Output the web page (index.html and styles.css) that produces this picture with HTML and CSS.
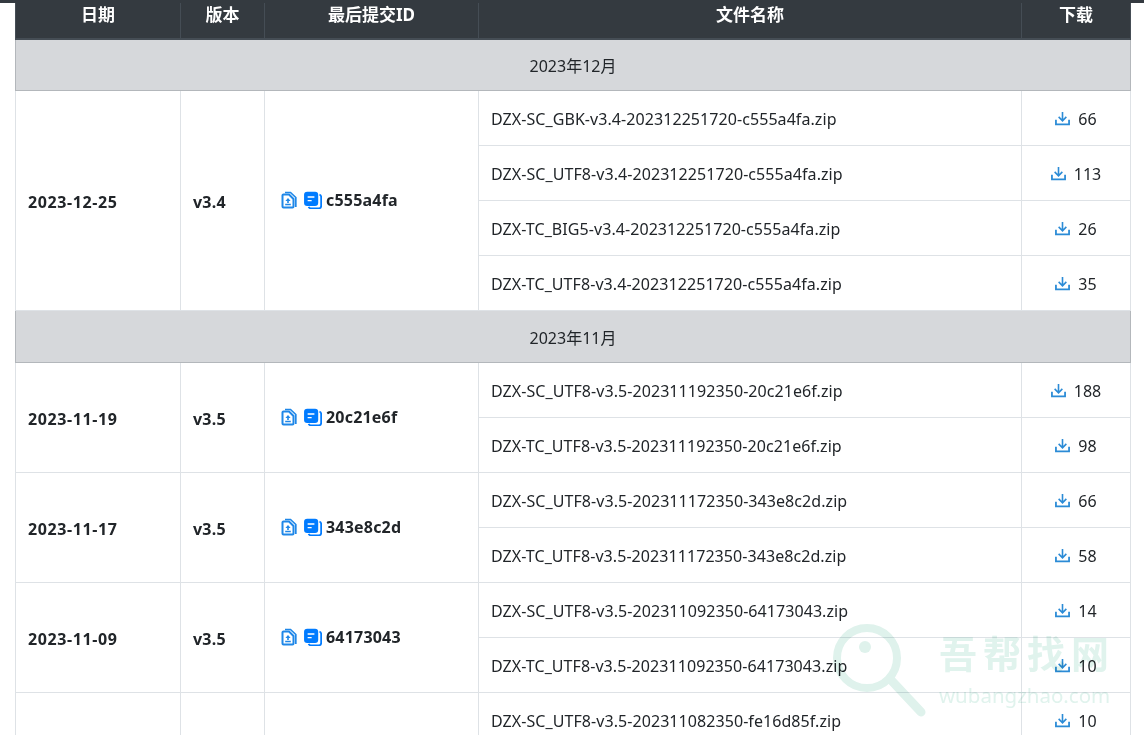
FILE: index.html
```html
<!DOCTYPE html>
<html lang="zh-CN">
<head>
<meta charset="utf-8">
<title>下载</title>
<link rel="stylesheet" href="styles.css">
</head>
<body>
<svg class="defs" width="0" height="0" aria-hidden="true">
  <symbol id="dl" viewBox="0 0 16 16">
    <path d="M8 1v9.2M3.9 6.3 8 10.4l4.1-4.1" fill="none" stroke="currentColor" stroke-width="1.7"/>
    <path d="M1 9.2v5h14v-5" fill="none" stroke="currentColor" stroke-width="1.9"/>
  </symbol>
  <symbol id="fa" viewBox="0 0 16 17">
    <path d="M4 1h5.5L14.8 6v9.4" fill="none" stroke="currentColor" stroke-width="1.7"/>
    <path d="M2.5 3H8l4.5 4.5V15a1 1 0 0 1-1 1h-9a1 1 0 0 1-1-1V4a1 1 0 0 1 1-1z" fill="#fff" stroke="currentColor" stroke-width="2"/>
    <path d="M7 6.6 4.4 9.4h5.2zM6.2 9.4h1.6v2H6.2zM4.2 12.2h5.6v1.6H4.2z" fill="currentColor"/>
  </symbol>
  <symbol id="fb" viewBox="0 0 18 17">
    <path d="M15.6 3.5c1 .3 1.6 1 1.6 2v8.6c0 1.4-1 2.3-2.4 2.3H7.5c-1 0-1.8-.5-2.2-1.3" fill="none" stroke="currentColor" stroke-width="1.7"/>
    <rect x="1" y="0.6" width="13.4" height="13.6" rx="3" fill="currentColor"/>
    <path d="M4.4 5h6.4v1.4H4.4zM4.4 8.4h3.8v1.4H4.4z" fill="#fff"/>
  </symbol>
</svg>
<div class="topstrip"></div>
<main class="page">
<table class="files">
  <colgroup>
    <col class="c-date"><col class="c-ver"><col class="c-id"><col class="c-name"><col class="c-count">
  </colgroup>
  <thead>
    <tr><th>日期</th><th>版本</th><th>最后提交ID</th><th>文件名称</th><th>下载</th></tr>
  </thead>
  <tbody>
    <tr class="month"><td colspan="5">2023年12月</td></tr>
    <tr>
      <td class="strong date" rowspan="4">2023-12-25</td><td class="strong" rowspan="4">v3.4</td>
      <td class="strong" rowspan="4"><span class="commit"><svg class="ic-a"><use href="#fa"/></svg><svg class="ic-b"><use href="#fb"/></svg>c555a4fa</span></td>
      <td class="file">DZX-SC_GBK-v3.4-202312251720-c555a4fa.zip</td>
      <td class="count"><svg class="ic-d"><use href="#dl"/></svg>66</td>
    </tr>
    <tr><td class="file">DZX-SC_UTF8-v3.4-202312251720-c555a4fa.zip</td><td class="count"><svg class="ic-d"><use href="#dl"/></svg>113</td></tr>
    <tr><td class="file">DZX-TC_BIG5-v3.4-202312251720-c555a4fa.zip</td><td class="count"><svg class="ic-d"><use href="#dl"/></svg>26</td></tr>
    <tr><td class="file">DZX-TC_UTF8-v3.4-202312251720-c555a4fa.zip</td><td class="count"><svg class="ic-d"><use href="#dl"/></svg>35</td></tr>
    <tr class="month month-tall"><td colspan="5">2023年11月</td></tr>
    <tr>
      <td class="strong date" rowspan="2">2023-11-19</td><td class="strong" rowspan="2">v3.5</td>
      <td class="strong" rowspan="2"><span class="commit"><svg class="ic-a"><use href="#fa"/></svg><svg class="ic-b"><use href="#fb"/></svg>20c21e6f</span></td>
      <td class="file">DZX-SC_UTF8-v3.5-202311192350-20c21e6f.zip</td>
      <td class="count"><svg class="ic-d"><use href="#dl"/></svg>188</td>
    </tr>
    <tr><td class="file">DZX-TC_UTF8-v3.5-202311192350-20c21e6f.zip</td><td class="count"><svg class="ic-d"><use href="#dl"/></svg>98</td></tr>
    <tr>
      <td class="strong date" rowspan="2">2023-11-17</td><td class="strong" rowspan="2">v3.5</td>
      <td class="strong" rowspan="2"><span class="commit"><svg class="ic-a"><use href="#fa"/></svg><svg class="ic-b"><use href="#fb"/></svg>343e8c2d</span></td>
      <td class="file">DZX-SC_UTF8-v3.5-202311172350-343e8c2d.zip</td>
      <td class="count"><svg class="ic-d"><use href="#dl"/></svg>66</td>
    </tr>
    <tr><td class="file">DZX-TC_UTF8-v3.5-202311172350-343e8c2d.zip</td><td class="count"><svg class="ic-d"><use href="#dl"/></svg>58</td></tr>
    <tr>
      <td class="strong date" rowspan="2">2023-11-09</td><td class="strong" rowspan="2">v3.5</td>
      <td class="strong" rowspan="2"><span class="commit"><svg class="ic-a"><use href="#fa"/></svg><svg class="ic-b"><use href="#fb"/></svg>64173043</span></td>
      <td class="file">DZX-SC_UTF8-v3.5-202311092350-64173043.zip</td>
      <td class="count"><svg class="ic-d"><use href="#dl"/></svg>14</td>
    </tr>
    <tr><td class="file">DZX-TC_UTF8-v3.5-202311092350-64173043.zip</td><td class="count"><svg class="ic-d"><use href="#dl"/></svg>10</td></tr>
    <tr>
      <td></td><td></td><td></td>
      <td class="file">DZX-SC_UTF8-v3.5-202311082350-fe16d85f.zip</td>
      <td class="count"><svg class="ic-d"><use href="#dl"/></svg>10</td>
    </tr>
  </tbody>
</table>
</main>
<div class="watermark" aria-label="吾帮找网 wubangzhao.com">
  <svg class="wm-logo" viewBox="0 0 96 96">
    <circle cx="35" cy="36" r="30" fill="none" stroke="#dff2ec" stroke-width="8"/>
    <circle cx="33" cy="25" r="6" fill="#dff2ec"/>
    <path d="M59 58 89 90" fill="none" stroke="#dff2ec" stroke-width="9" stroke-linecap="round"/>
  </svg>
  <div class="wm-text">
    <div class="wm-cn">吾帮找网</div>
    <div class="wm-en">wubangzhao.com</div>
  </div>
</div>
</body>
</html>
```
FILE: styles.css
```css
html, body {
  margin: 0;
  padding: 0;
  background: #fff;
  overflow: hidden;
  height: 735px;
}
body {
  font-family: "Noto Sans", "Noto Sans CJK SC", sans-serif;
  font-size: 16px;
  color: #212529;
}
.defs {
  position: absolute;
}
.topstrip {
  height: 3px;
  background: #343a40;
}
.page {
  padding: 0 14px 0 15px;
}
.files {
  width: 1115px;
  table-layout: fixed;
  border-collapse: collapse;
  margin: 0;
}
.c-date { width: 165px; }
.c-ver { width: 84px; }
.c-id { width: 214px; }
.c-name { width: 543px; }
.c-count { width: 109px; }
.files th {
  height: 36px;
  padding: 0 0 11px;
  box-sizing: border-box;
  background: #343a40;
  color: #fff;
  font-weight: 700;
  text-align: center;
  border: 1px solid #454d55;
  border-top: 0;
  border-bottom: 2px solid #454d55;
  font-size: 17px;
  line-height: 24px;
}
.files td {
  height: 55px;
  box-sizing: border-box;
  padding: 0 12px;
  border: 1px solid #dee2e6;
}
.files td.strong {
  font-weight: 700;
  padding-top: 3px;
  letter-spacing: 0.2px;
}
.files td.date {
  letter-spacing: 0.6px;
}
.files td.file {
  padding-top: 2px;
  letter-spacing: 0.07px;
}
.files .month td {
  height: 51px;
  background: #d6d8db;
  border-color: #b3b7bb;
  text-align: center;
}
.files .month-tall td {
  height: 52px;
  padding-top: 1px;
}
.files td.count {
  text-align: center;
  padding-top: 3px;
}
.commit {
  display: inline-flex;
  align-items: center;
  margin-left: 4px;
}
.ic-a {
  width: 16px;
  height: 18px;
  color: #1f87e8;
  margin-right: 6px;
}
.ic-b {
  width: 19px;
  height: 18px;
  color: #007bff;
  margin-right: 4px;
}
.ic-d {
  width: 15px;
  height: 15px;
  color: #2b8bd6;
  margin-right: 8px;
  vertical-align: -1px;
}
.watermark {
  position: absolute;
  left: 832px;
  top: 622px;
  display: flex;
  gap: 11px;
  pointer-events: none;
  mix-blend-mode: multiply;
}
.wm-logo {
  width: 96px;
  height: 96px;
}
.wm-cn {
  font-size: 38px;
  line-height: 42px;
  font-weight: 700;
  letter-spacing: 6px;
  color: #e0f3ed;
  font-family: "Noto Sans CJK SC", sans-serif;
  margin-top: 9px;
}
.wm-en {
  font-size: 20.5px;
  line-height: 30px;
  color: #e0f3ed;
  margin-top: 7px;
}
```
